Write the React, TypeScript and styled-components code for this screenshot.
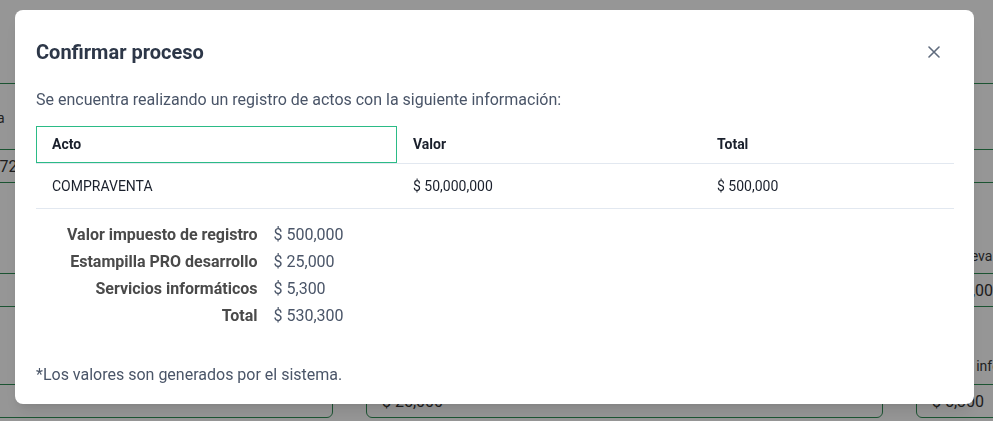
import React from 'react'
import styled, { createGlobalStyle } from 'styled-components'

const GlobalStyle = createGlobalStyle`
  html, body {
    margin: 0;
    padding: 0;
    background: #ffffff;
    font-family: Roboto, 'Liberation Sans', Arial, sans-serif;
    overflow: hidden;
  }
`

// ---------- registration form behind the dialog ----------

const FormPage = styled.main`
  margin-left: -184px;
`

const SectionHead = styled.div`
  box-sizing: border-box;
  height: 84px;
  border-bottom: 1px solid #2f8f55;
`

const FormGrid = styled.div`
  display: grid;
  grid-template-columns: repeat(3, 517px);
  column-gap: 33px;
`

const FieldColumn = styled.div`
  display: flex;
  flex-direction: column;
`

const Field = styled.div<{ $top: number }>`
  display: flex;
  flex-direction: column;
  margin-top: ${(p) => p.$top}px;
`

const FieldLabel = styled.label<{ $gap?: number }>`
  font-size: 14px;
  line-height: 20px;
  color: #3a3a3a;
  white-space: nowrap;
  margin-bottom: ${(p) => p.$gap ?? 7}px;
`

const FieldInput = styled.div`
  box-sizing: border-box;
  height: 34px;
  border: 1px solid #2f8f55;
  border-radius: 6px;
  padding: 0 15px;
  display: flex;
  align-items: center;
  font-size: 16px;
  color: #333333;
  white-space: nowrap;
`

type FormField = { label: string; value: string }

const fieldTops = [24, 63, 49]
const labelGaps = [21, 7, 8]

const formColumns: FormField[][] = [
  [
    { label: 'Número matrícula inmobiliaria', value: '050C-001928374-2023-72' },
    { label: 'Valor del acto', value: '$ 50,000,000' },
    { label: 'Valor impuesto de registro', value: '$ 500,000' },
  ],
  [
    { label: 'Número de documento', value: '4521' },
    { label: 'Cuantía', value: '$ 50,000,000' },
    { label: 'Estampilla PRO desarrollo', value: '$ 25,000' },
  ],
  [
    { label: 'Notaría', value: '' },
    { label: 'Tarifa nueva', value: '$ 150,000' },
    { label: 'Servicios informáticos', value: '$ 5,300' },
  ],
]

function BackgroundForm() {
  return (
    <FormPage>
      <SectionHead />
      <FormGrid>
        {formColumns.map((column, ci) => (
          <FieldColumn key={ci}>
            {column.map((field, fi) => (
              <Field key={fi} $top={fieldTops[fi]}>
                <FieldLabel $gap={labelGaps[fi]}>{field.label}</FieldLabel>
                <FieldInput>{field.value}</FieldInput>
              </Field>
            ))}
          </FieldColumn>
        ))}
      </FormGrid>
    </FormPage>
  )
}

// ---------- confirmation dialog ----------

const Overlay = styled.div`
  position: fixed;
  inset: 0;
  background: rgba(0, 0, 0, 0.41);
  display: flex;
  align-items: flex-start;
  padding: 10px 0 0 15px;
`

const Dialog = styled.section`
  box-sizing: border-box;
  width: 959px;
  background: #ffffff;
  border-radius: 8px;
  padding: 27px 20px 17px 21px;
  box-shadow: 0 10px 15px -3px rgba(0, 0, 0, 0.1), 0 4px 6px -2px rgba(0, 0, 0, 0.05);
  color: #4a5568;
`

const DialogHeader = styled.header`
  display: flex;
  align-items: center;
  justify-content: space-between;
  height: 30px;
`

const Title = styled.h2`
  margin: 0;
  font-size: 20px;
  line-height: 30px;
  font-weight: 700;
  color: #2d3748;
`

const CloseButton = styled.button`
  width: 32px;
  height: 32px;
  margin-right: 4px;
  border: none;
  background: transparent;
  border-radius: 6px;
  display: flex;
  align-items: center;
  justify-content: center;
  padding: 0;
  color: #5f6b7d;
  cursor: pointer;
`

const Intro = styled.p`
  margin: 21px 0 0;
  font-size: 16px;
  line-height: 24px;
`

const ActsTable = styled.table`
  margin-top: 14px;
  width: 918px;
  border-collapse: collapse;
  table-layout: fixed;
`

const HeadCell = styled.th<{ $width: number; $focused?: boolean }>`
  width: ${(p) => p.$width}px;
  box-sizing: border-box;
  height: 37px;
  padding: 0 16px;
  text-align: left;
  font-size: 14px;
  font-weight: 700;
  color: #1a202c;
  border-bottom: 1px solid #e2e8f0;
  box-shadow: ${(p) => (p.$focused ? 'inset 0 0 0 1px #2bbb86' : 'none')};
`

const BodyCell = styled.td`
  height: 45px;
  box-sizing: border-box;
  padding: 0 16px;
  font-size: 14px;
  color: #1a202c;
  border-bottom: 1px solid #e2e8f0;
`

const Summary = styled.dl`
  margin: 14px 0 0 31px;
  display: grid;
  grid-template-columns: auto auto;
  justify-content: start;
  column-gap: 16px;
  row-gap: 3px;
  font-size: 16px;
  line-height: 24px;
`

const SummaryLabel = styled.dt`
  text-align: right;
  font-weight: 700;
  color: #4a4a4a;
`

const SummaryValue = styled.dd`
  margin: 0;
  color: #4a5568;
`

const Note = styled.p`
  margin: 35px 0 0;
  font-size: 16px;
  line-height: 24px;
  color: #4a5568;
`

const acts = [{ name: 'COMPRAVENTA', value: '$ 50,000,000', total: '$ 500,000' }]

const charges = [
  ['Valor impuesto de registro', '$ 500,000'],
  ['Estampilla PRO desarrollo', '$ 25,000'],
  ['Servicios informáticos', '$ 5,300'],
  ['Total', '$ 530,300'],
]

function CloseIcon() {
  return (
    <svg width="12" height="12" viewBox="0 0 12 12" fill="none">
      <path d="M1 1L11 11M11 1L1 11" stroke="currentColor" strokeWidth="1.6" strokeLinecap="round" />
    </svg>
  )
}

function ConfirmDialog() {
  return (
    <Overlay>
      <Dialog role="dialog" aria-modal="true">
        <DialogHeader>
          <Title>Confirmar proceso</Title>
          <CloseButton aria-label="Cerrar">
            <CloseIcon />
          </CloseButton>
        </DialogHeader>

        <Intro>Se encuentra realizando un registro de actos con la siguiente información:</Intro>

        <ActsTable>
          <thead>
            <tr>
              <HeadCell $width={361} $focused>
                Acto
              </HeadCell>
              <HeadCell $width={304}>Valor</HeadCell>
              <HeadCell $width={253}>Total</HeadCell>
            </tr>
          </thead>
          <tbody>
            {acts.map((act) => (
              <tr key={act.name}>
                <BodyCell>{act.name}</BodyCell>
                <BodyCell>{act.value}</BodyCell>
                <BodyCell>{act.total}</BodyCell>
              </tr>
            ))}
          </tbody>
        </ActsTable>

        <Summary>
          {charges.map(([label, value]) => (
            <React.Fragment key={label}>
              <SummaryLabel>{label}</SummaryLabel>
              <SummaryValue>{value}</SummaryValue>
            </React.Fragment>
          ))}
        </Summary>

        <Note>*Los valores son generados por el sistema.</Note>
      </Dialog>
    </Overlay>
  )
}

export default function App() {
  return (
    <>
      <GlobalStyle />
      <BackgroundForm />
      <ConfirmDialog />
    </>
  )
}
